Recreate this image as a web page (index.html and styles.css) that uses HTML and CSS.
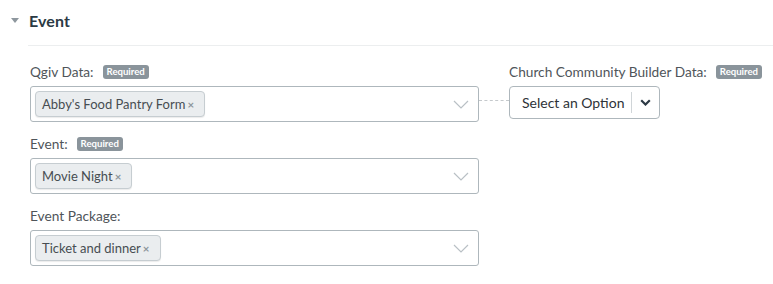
FILE: index.html
```html
<!DOCTYPE html>
<html>
<head>
<meta charset="utf-8">
<link rel="stylesheet" href="styles.css">
</head>
<body>
<section class="panel">
  <header class="head">
    <span class="caret"></span>
    <h2 class="title">Event</h2>
  </header>
  <div class="rule"></div>
  <div class="body">
    <div class="col-left">
      <div class="field">
        <div class="label">Qgiv Data: <span class="badge">Required</span></div>
        <div class="multi">
          <span class="tag">Abby's Food Pantry Form<span class="x">×</span></span>
          <svg class="chev" width="16" height="9" viewBox="0 0 16 9"><path d="M1 1 L8 8 L15 1" fill="none" stroke="#b9c0c5" stroke-width="1.2"/></svg>
        </div>
      </div>
      <div class="field">
        <div class="label">Event: <span class="badge">Required</span></div>
        <div class="multi">
          <span class="tag">Movie Night<span class="x">×</span></span>
          <svg class="chev" width="16" height="9" viewBox="0 0 16 9"><path d="M1 1 L8 8 L15 1" fill="none" stroke="#b9c0c5" stroke-width="1.2"/></svg>
        </div>
      </div>
      <div class="field">
        <div class="label">Event Package:</div>
        <div class="multi">
          <span class="tag">Ticket and dinner<span class="x">×</span></span>
          <svg class="chev" width="16" height="9" viewBox="0 0 16 9"><path d="M1 1 L8 8 L15 1" fill="none" stroke="#b9c0c5" stroke-width="1.2"/></svg>
        </div>
      </div>
    </div>
    <div class="connector"></div>
    <div class="col-right">
      <div class="label">Church Community Builder Data: <span class="badge">Required</span></div>
      <div class="single">
        <span class="single-text">Select an Option</span>
        <span class="single-btn">
          <svg width="11" height="7" viewBox="0 0 11 7"><path d="M1.2 1.2 L5.5 5.5 L9.8 1.2" fill="none" stroke="#2d3a45" stroke-width="2.2"/></svg>
        </span>
      </div>
    </div>
  </div>
</section>
</body>
</html>
```

FILE: styles.css
```css
html, body {
  margin: 0;
  padding: 0;
  background: #ffffff;
}
body {
  font-family: "Lato", "Open Sans", sans-serif;
  color: #4a4f54;
  width: 773px;
  height: 284px;
  overflow: hidden;
}
.panel {
  padding-top: 10px;
}
.head {
  display: flex;
  align-items: center;
  height: 20px;
  padding-left: 11px;
}
.caret {
  width: 0;
  height: 0;
  border-left: 4.5px solid transparent;
  border-right: 4.5px solid transparent;
  border-top: 5px solid #8e979e;
  margin-right: 10px;
  margin-top: 1px;
}
.title {
  margin: 0;
  font-size: 16px;
  font-weight: 700;
  color: #2b3a44;
  letter-spacing: 0.1px;
}
.rule {
  margin-left: 28px;
  margin-top: 15px;
  height: 1px;
  background: #eceeef;
}
.body {
  display: flex;
  padding-left: 30px;
  padding-top: 19px;
}
.col-left {
  width: 449px;
  display: flex;
  flex-direction: column;
  gap: 15px;
}
.field {
  display: flex;
  flex-direction: column;
  gap: 7px;
}
.label {
  font-size: 13.7px;
  line-height: 14px;
  height: 14px;
  color: #4f555a;
  display: flex;
  align-items: center;
  white-space: nowrap;
}
.badge {
  display: inline-block;
  background: #8a949b;
  color: #ffffff;
  font-size: 9.6px;
  font-weight: 700;
  line-height: 14px;
  height: 14px;
  padding: 0 4px;
  border-radius: 3px;
  margin-left: 9px;
}
.multi {
  box-sizing: border-box;
  height: 36px;
  border: 1px solid #aeb7bc;
  border-radius: 3px;
  display: flex;
  align-items: center;
  justify-content: space-between;
  padding: 0 9px 0 4px;
  background: #fff;
}
.tag {
  box-sizing: border-box;
  height: 26px;
  display: inline-flex;
  align-items: center;
  background: #eaedef;
  border: 1px solid #c6cdd1;
  border-radius: 4px;
  padding: 0 10px 0 6px;
  font-size: 13px;
  color: #474d52;
  box-shadow: 0 1px 1px rgba(0,0,0,0.08);
}
.x {
  font-size: 11.5px;
  color: #8d959b;
  margin-left: 2px;
  font-weight: 700;
}
.chev {
  display: block;
  margin-top: 1px;
}
.connector {
  width: 30px;
  height: 0;
  border-top: 1px dashed #c5c9cc;
  margin-top: 35px;
}
.col-right {
  display: flex;
  flex-direction: column;
  gap: 7px;
}
.single {
  box-sizing: border-box;
  width: 151px;
  height: 33px;
  border: 1px solid #aeb7bc;
  border-radius: 4px;
  display: flex;
  align-items: center;
  background: #fff;
}
.single-text {
  flex: 1;
  font-size: 14px;
  color: #2e3338;
  padding-left: 12px;
}
.single-btn {
  width: 27px;
  height: 21px;
  border-left: 1px solid #d0d5d8;
  display: flex;
  align-items: center;
  justify-content: center;
}
.single-btn svg {
  display: block;
}
```
